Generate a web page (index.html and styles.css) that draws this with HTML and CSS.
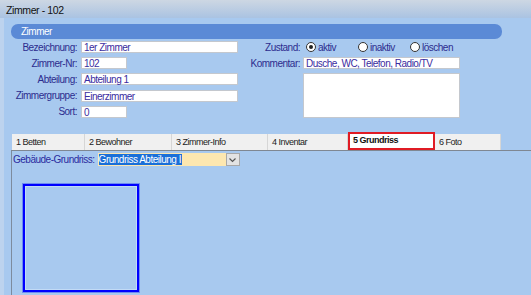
FILE: index.html
```html
<!DOCTYPE html>
<html lang="de">
<head>
    <meta charset="UTF-8">
    <title>Zimmer - 102</title>
    <link rel="stylesheet" href="styles.css">
</head>
<body>
    <div class="window">
        <div class="titlebar">Zimmer - 102</div>
        <div class="client">
            <div class="section-head">Zimmer</div>

            <div class="form">
                <div class="fields left">
                    <label>Bezeichnung:</label>
                    <div class="input wide">1er Zimmer</div>
                    <label>Zimmer-Nr:</label>
                    <div class="input short">102</div>
                    <label>Abteilung:</label>
                    <div class="input wide">Abteilung 1</div>
                    <label>Zimmergruppe:</label>
                    <div class="input wide">Einerzimmer</div>
                    <label>Sort:</label>
                    <div class="input short">0</div>
                </div>

                <div class="fields right">
                    <label>Zustand:</label>
                    <div class="radios">
                        <span class="option"><span class="radio checked"></span>aktiv</span>
                        <span class="option"><span class="radio"></span>inaktiv</span>
                        <span class="option"><span class="radio"></span>löschen</span>
                    </div>
                    <label>Kommentar:</label>
                    <div class="input wide">Dusche, WC, Telefon, Radio/TV</div>
                    <span></span>
                    <div class="input memo"></div>
                </div>
            </div>

            <div class="tabs">
                <div class="tab t1">1 Betten</div>
                <div class="tab t2">2 Bewohner</div>
                <div class="tab t3">3 Zimmer-Info</div>
                <div class="tab t4">4 Inventar</div>
                <div class="tab t5 active">5 Grundriss</div>
                <div class="tab t6">6 Foto</div>
            </div>

            <div class="panel">
                <div class="combo-row">
                    <label>Gebäude-Grundriss:</label>
                    <div class="combo">
                        <span class="combo-value"><span class="selected">Grundriss Abteilung I</span></span>
                        <span class="combo-button">
                            <svg width="9" height="6" viewBox="0 0 9 6"><path d="M1.5 1.5 L4.5 4.5 L7.5 1.5" fill="none" stroke="#555" stroke-width="1.2"/></svg>
                        </span>
                    </div>
                </div>
                <div class="plan"></div>
            </div>
        </div>
    </div>
</body>
</html>
```

FILE: styles.css
```css
body {
    margin: 0;
    font-family: "Liberation Sans", Arial, sans-serif;
    font-size: 10px;
    letter-spacing: -0.5px;
    background: #a8c9ef;
}

.window {
    width: 531px;
    height: 295px;
    overflow: hidden;
    display: flex;
    flex-direction: column;
}

.titlebar {
    height: 18px;
    line-height: 20px;
    padding-left: 6px;
    font-size: 10.5px;
    letter-spacing: -0.4px;
    color: #111;
    background: linear-gradient(#cdd7e3, #aac3e2);
}

.client {
    flex: 1;
    border-left: 4px solid #bdd3ee;
    padding: 6px 0 0 7px;
    display: flex;
    flex-direction: column;
}

.section-head {
    width: 481px;
    height: 15px;
    line-height: 15px;
    padding-left: 10px;
    border-radius: 7px;
    background: #5b8ad6;
    color: #fff;
}

.form {
    display: flex;
    margin-top: 2px;
}

.fields {
    display: grid;
    row-gap: 4px;
    align-items: center;
    justify-items: start;
    color: #2c2c8e;
}

.fields label {
    justify-self: end;
    white-space: nowrap;
}

.fields.left {
    grid-template-columns: 66px auto;
    column-gap: 4px;
    width: 227px;
}

.fields.right {
    grid-template-columns: 62px auto;
    column-gap: 3px;
    align-self: start;
}

.input {
    height: 12px;
    line-height: 11px;
    padding-left: 2px;
    background: #fff;
    border: 1px solid #c4c8ce;
    box-sizing: border-box;
    color: #3a2ca0;
    white-space: nowrap;
}

.input.wide {
    width: 157px;
}

.input.short {
    width: 46px;
}

.input.memo {
    width: 157px;
    height: 45px;
}

.radios {
    display: flex;
    align-items: center;
    height: 12px;
}

.option {
    display: flex;
    align-items: center;
    width: 52px;
}

.radio {
    width: 10px;
    height: 10px;
    box-sizing: border-box;
    border: 1px solid #333;
    border-radius: 50%;
    background: #fff;
    margin: 0 2px 0 3px;
    display: flex;
    align-items: center;
    justify-content: center;
}

.radio.checked::after {
    content: "";
    width: 4px;
    height: 4px;
    border-radius: 50%;
    background: #222;
}

.tabs {
    display: flex;
    align-items: flex-end;
    height: 18px;
    margin-top: 14px;
    padding-left: 1px;
    border-bottom: 1px solid #7f8792;
    font-size: 9px;
    color: #222;
}

.tab {
    height: 16px;
    line-height: 16px;
    padding-left: 4px;
    box-sizing: border-box;
    background: #f0f0f0;
    border-right: 1px solid #d6d6d6;
}

.t1 { width: 73px; }
.t2 { width: 87px; }
.t3 { width: 96px; }
.t4 { width: 80px; }
.t5 { width: 87px; }
.t6 { width: 66px; }

.tab.active {
    height: 18px;
    line-height: 13px;
    background: #fff;
    border: 2px solid #e01b24;
    padding-left: 3px;
    font-weight: bold;
    color: #111;
}

.panel {
    flex: 1;
    border-left: 1px solid #7d8b9e;
    padding: 2px 0 0 1px;
}

.combo-row {
    display: flex;
    align-items: center;
    color: #2b2ba0;
}

.combo {
    display: flex;
    margin-left: 3px;
    height: 13px;
}

.combo-value {
    width: 128px;
    background: #fde7b0;
    line-height: 11px;
    padding: 1px;
    box-sizing: border-box;
}

.selected {
    background: #1a6fd8;
    color: #fff;
    padding-right: 1px;
}

.combo-button {
    width: 14px;
    box-sizing: border-box;
    background: #e3e3e3;
    border: 1px solid #a8a8a8;
    display: flex;
    align-items: center;
    justify-content: center;
}

.plan {
    width: 116px;
    height: 108px;
    box-sizing: border-box;
    margin: 18px 0 0 10px;
    border: 2px solid #0000ff;
    box-shadow: 0 0 0 1px #6f8cf0, inset 0 0 0 1px #c2dbf6;
}
```
